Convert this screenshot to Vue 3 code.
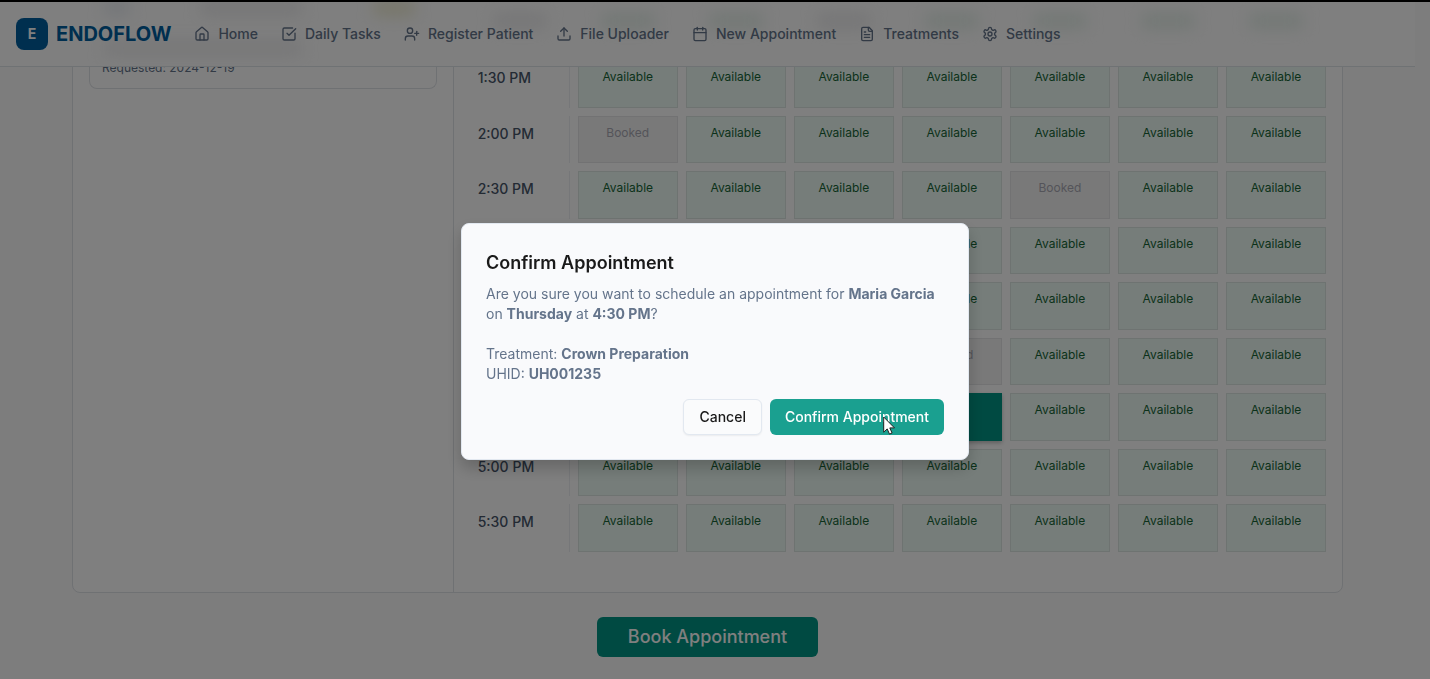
<script setup>
const navItems = [
  { label: 'Home', paths: ['M15 21v-8a1 1 0 0 0-1-1h-4a1 1 0 0 0-1 1v8', 'M3 10a2 2 0 0 1 .709-1.528l7-6a2 2 0 0 1 2.582 0l7 6A2 2 0 0 1 21 10v9a2 2 0 0 1-2 2H5a2 2 0 0 1-2-2z'] },
  { label: 'Daily Tasks', paths: ['M21 10.656V19a2 2 0 0 1-2 2H5a2 2 0 0 1-2-2V5a2 2 0 0 1 2-2h12.344', 'm9 11 3 3L22 4'] },
  { label: 'Register Patient', paths: ['M16 21v-2a4 4 0 0 0-4-4H6a4 4 0 0 0-4 4v2', 'M13 7a4 4 0 1 1-8 0 4 4 0 0 1 8 0z', 'M19 8v6', 'M22 11h-6'] },
  { label: 'File Uploader', paths: ['M12 3v12', 'm17 8-5-5-5 5', 'M21 15v4a2 2 0 0 1-2 2H5a2 2 0 0 1-2-2v-4'] },
  { label: 'New Appointment', paths: ['M8 2v4', 'M16 2v4', 'M5 4h14a2 2 0 0 1 2 2v14a2 2 0 0 1-2 2H5a2 2 0 0 1-2-2V6a2 2 0 0 1 2-2z', 'M3 10h18'] },
  { label: 'Treatments', paths: ['M15 2H6a2 2 0 0 0-2 2v16a2 2 0 0 0 2 2h12a2 2 0 0 0 2-2V7Z', 'M14 2v4a2 2 0 0 0 2 2h4', 'M10 9H8', 'M16 13H8', 'M16 17H8'] },
  { label: 'Settings', paths: ['M12.22 2h-.44a2 2 0 0 0-2 2v.18a2 2 0 0 1-1 1.73l-.43.25a2 2 0 0 1-2 0l-.15-.08a2 2 0 0 0-2.73.73l-.22.38a2 2 0 0 0 .73 2.73l.15.1a2 2 0 0 1 1 1.72v.51a2 2 0 0 1-1 1.74l-.15.09a2 2 0 0 0-.73 2.73l.22.38a2 2 0 0 0 2.73.73l.15-.08a2 2 0 0 1 2 0l.43.25a2 2 0 0 1 1 1.73V20a2 2 0 0 0 2 2h.44a2 2 0 0 0 2-2v-.18a2 2 0 0 1 1-1.73l.43-.25a2 2 0 0 1 2 0l.15.08a2 2 0 0 0 2.73-.73l.22-.39a2 2 0 0 0-.73-2.73l-.15-.08a2 2 0 0 1-1-1.74v-.5a2 2 0 0 1 1-1.74l.15-.09a2 2 0 0 0 .73-2.73l-.22-.38a2 2 0 0 0-2.73-.73l-.15.08a2 2 0 0 1-2 0l-.43-.25a2 2 0 0 1-1-1.73V4a2 2 0 0 0-2-2z', 'M15 12a3 3 0 1 1-6 0 3 3 0 0 1 6 0z'] },
]

const times = ['1:30 PM', '2:00 PM', '2:30 PM', '3:00 PM', '3:30 PM', '4:00 PM', '4:30 PM', '5:00 PM', '5:30 PM']
const booked = new Set(['2:00 PM-0', '2:30 PM-4', '4:00 PM-3'])
const selected = '4:30 PM-3'

const rows = times.map((time) => ({
  time,
  slots: Array.from({ length: 7 }, (_, day) => {
    const key = `${time}-${day}`
    if (key === selected) return { key, state: 'selected', label: '' }
    return booked.has(key)
      ? { key, state: 'booked', label: 'Booked' }
      : { key, state: 'available', label: 'Available' }
  }),
}))
</script>

<template>
  <div class="page">
    <div class="top-strip"></div>
    <header class="header">
      <div class="glow" aria-hidden="true">
        <div class="glow-side">
          <i class="blob blue"></i><i class="blob gray"></i><i class="blob yellow"></i>
          <i class="blob wide"></i>
        </div>
        <div class="glow-grid">
          <i v-for="n in 8" :key="n" class="blob" :class="n === 1 || n === 4 ? 'gray' : 'green'"></i>
        </div>
      </div>
      <a class="brand" href="#"><span class="mark">E</span><span class="name">ENDOFLOW</span></a>
      <nav class="nav">
        <a v-for="item in navItems" :key="item.label" href="#">
          <svg viewBox="0 0 24 24" aria-hidden="true"><path v-for="d in item.paths" :key="d" :d="d" /></svg>
          <span>{{ item.label }}</span>
        </a>
      </nav>
    </header>

    <main class="main">
      <section class="panel">
        <aside class="side">
          <div class="request">Requested: 2024-12-19</div>
        </aside>
        <div class="schedule-wrap">
          <table class="schedule">
            <tbody>
              <tr v-for="row in rows" :key="row.time">
                <th scope="row">{{ row.time }}</th>
                <td v-for="slot in row.slots" :key="slot.key">
                  <button type="button" class="slot" :class="slot.state" :disabled="slot.state === 'booked'">{{ slot.label }}</button>
                </td>
              </tr>
            </tbody>
          </table>
        </div>
      </section>
      <button type="button" class="book">Book Appointment</button>
    </main>

    <div class="overlay">
      <div class="dialog" role="alertdialog" aria-modal="true" aria-labelledby="dialog-title">
        <h2 id="dialog-title">Confirm Appointment</h2>
        <p>
          Are you sure you want to schedule an appointment for <strong>Maria Garcia</strong> on
          <strong>Thursday</strong> at <strong>4:30 PM</strong>?<br /><br />
          Treatment: <strong>Crown Preparation</strong><br />
          UHID: <strong>UH001235</strong>
        </p>
        <div class="actions">
          <button type="button" class="cancel">Cancel</button>
          <button type="button" class="confirm">
            Confirm Appointment
            <svg class="pointer" viewBox="0 0 12 19" aria-hidden="true">
              <path d="M.7 1v15.2l3.5-3.3 2.3 5.2 2.6-1.1-2.3-5.1h4.7z" />
            </svg>
          </button>
        </div>
      </div>
    </div>
  </div>
</template>

<style>
body {
  margin: 0;
  background: #fafafb;
}
</style>

<style scoped>
.page {
  min-height: 100vh;
  box-sizing: border-box;
  padding-right: 15px;
  overflow: hidden;
  font-family: Inter, "Liberation Sans", sans-serif;
  font-size: 14px;
  line-height: 20px;
  color: #1a1a1a;
}
.page * {
  box-sizing: border-box;
}
button {
  font: inherit;
  margin: 0;
  border: 0;
  padding: 0;
}
a {
  color: inherit;
  text-decoration: none;
}
.top-strip {
  height: 2px;
  margin-right: -15px;
  background: #000;
}
.header {
  position: relative;
  display: flex;
  align-items: center;
  gap: 23px;
  height: 65px;
  padding: 0 16px;
  background: #fefefe;
  border-bottom: 1px solid #dfe4e8;
}
.glow {
  position: absolute;
  inset: 0;
  overflow: hidden;
  display: flex;
  padding: 0 73px;
}
.glow-side {
  width: 30%;
  display: grid;
  grid-template-columns: 24px 100px 40px;
  grid-template-rows: 12px 12px;
  column-gap: 32px;
  row-gap: 28px;
  justify-content: space-between;
  padding: 0 40px 0 32px;
}
.glow-grid {
  flex: 1;
  display: grid;
  grid-template-columns: repeat(8, 1fr);
  column-gap: 8px;
  padding: 13px 16px 0;
}
.blob {
  height: 12px;
  filter: blur(8px);
}
.glow-grid .blob {
  margin: 0 24px;
}
.blob.blue { background: #e2e8f0; }
.blob.gray { background: #e8e8ea; }
.blob.yellow { background: #ebe8c6; }
.blob.green { background: #dfede5; }
.blob.wide {
  grid-column: 1 / 3;
  background: #ebebed;
}
.brand {
  position: relative;
  display: flex;
  align-items: center;
  gap: 8px;
  color: #005f9f;
}
.mark {
  display: grid;
  place-items: center;
  width: 32px;
  height: 32px;
  border-radius: 8px;
  background: #005f9f;
  color: #fff;
  font-weight: 700;
}
.name {
  font-size: 20px;
  line-height: 28px;
  font-weight: 700;
}
.nav {
  position: relative;
  display: flex;
  gap: 23px;
  font-weight: 500;
  color: #64748b;
}
.nav a {
  display: flex;
  align-items: center;
  gap: 8px;
}
.nav svg {
  width: 16px;
  height: 16px;
  fill: none;
  stroke: currentColor;
  stroke-width: 2;
  stroke-linecap: round;
  stroke-linejoin: round;
}
.main {
  display: flex;
  flex-direction: column;
  align-items: center;
  gap: 24px;
  padding: 0 72px 22px;
  overflow: hidden;
}
.panel {
  display: flex;
  align-self: stretch;
  margin-top: -8px;
  border: 1px solid #dfe2e6;
  border-radius: 0 0 8px 8px;
  background: #fff;
}
.side {
  width: 30%;
  padding: 0 16px;
  border-right: 1px solid #dfe2e6;
}
.request {
  padding: 0 12px 12px;
  border: 1px solid #dfe2e6;
  border-top: 0;
  border-radius: 0 0 8px 8px;
  font-size: 12px;
  line-height: 16px;
  color: #64748b;
}
.schedule-wrap {
  flex: 1;
  padding: 0 16px 40px;
}
.schedule {
  display: grid;
  grid-template-columns: repeat(8, 1fr);
  grid-auto-rows: 1fr;
  gap: 8px;
  min-height: 492px;
}
.schedule tbody,
.schedule tr {
  display: contents;
}
.schedule th {
  padding: 8px;
  border-right: 1px solid #eceff2;
  text-align: left;
  font-weight: 500;
  color: #475569;
}
.schedule td {
  display: flex;
  padding: 0;
}
.slot {
  flex: 1;
  display: flex;
  justify-content: center;
  align-items: flex-start;
  padding-top: 8px;
  border: 1px solid #dce6e3;
  font-size: 12px;
  line-height: 16px;
}
.available {
  background: #ecfaf4;
  color: #166534;
}
.booked {
  background: #f3f3f3;
  border-color: #e4e5e7;
  color: #a9a9b4;
}
.selected {
  background: #009584;
  border-color: #009584;
  box-shadow: 0 2px 4px rgba(0, 0, 0, 0.25);
}
.book {
  height: 40px;
  padding: 0 31px;
  border-radius: 6px;
  background: #009584;
  color: #fff;
  font-size: 18px;
  font-weight: 500;
}
.overlay {
  position: fixed;
  inset: 0;
  display: flex;
  align-items: center;
  justify-content: center;
  padding-top: 4px;
  background: rgba(0, 0, 0, 0.5);
}
.dialog {
  width: 508px;
  max-width: 100%;
  padding: 24px;
  border: 1px solid #e2e8f0;
  border-radius: 8px;
  background: #f9fafc;
  box-shadow: 0 8px 16px rgba(0, 0, 0, 0.2);
}
h2 {
  margin: 0 0 6px;
  font-size: 18px;
  line-height: 30px;
  font-weight: 600;
}
p {
  margin: 0 0 15px;
  color: #64748b;
}
strong {
  font-weight: 700;
}
.actions {
  display: flex;
  justify-content: flex-end;
  gap: 8px;
}
.cancel,
.confirm {
  position: relative;
  height: 36px;
  padding: 0 15px;
  border-radius: 6px;
  font-weight: 500;
}
.cancel {
  border: 1px solid #e2e8f0;
  background: #fafbfc;
  color: #1a1a1a;
  box-shadow: 0 1px 2px rgba(0, 0, 0, 0.06);
}
.confirm {
  background: #1aa090;
  color: #fff;
}
.pointer {
  position: absolute;
  left: 113px;
  top: 17px;
  width: 12px;
  height: 19px;
  fill: #fff;
  stroke: #222;
  stroke-width: 1;
}
</style>
